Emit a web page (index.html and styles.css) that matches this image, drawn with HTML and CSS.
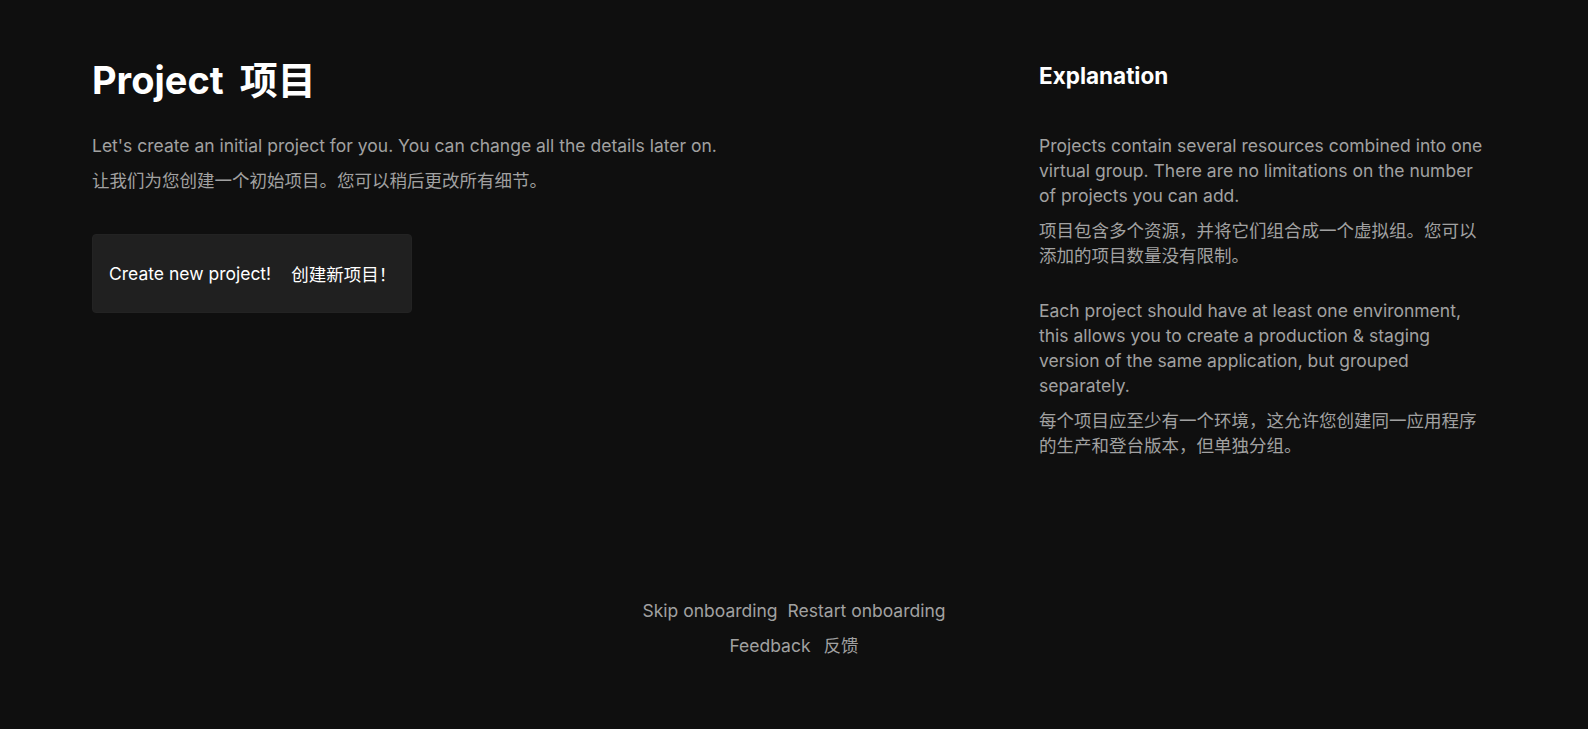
FILE: index.html
```html
<!DOCTYPE html>
<html lang="en">
<head>
<meta charset="utf-8">
<title>Project</title>
<link rel="stylesheet" href="styles.css">
</head>
<body>
<div class="page">
  <main class="content">
    <section class="main-col">
      <h1 class="title">Project <span class="title-zh">项目</span></h1>
      <p class="text">Let's create an initial project for you. You can change all the details later on.</p>
      <p class="text zh">让我们为您创建一个初始项目。您可以稍后更改所有细节。</p>
      <button class="create-btn" type="button"><span>Create new project!</span><span class="btn-zh">创建新项目！</span></button>
    </section>
    <aside class="explain">
      <h2 class="explain-title">Explanation</h2>
      <div class="block">
        <p class="text">Projects contain several resources combined into one virtual group. There are no limitations on the number of projects you can add.</p>
        <p class="text zh">项目包含多个资源，并将它们组合成一个虚拟组。您可以添加的项目数量没有限制。</p>
      </div>
      <div class="block">
        <p class="text">Each project should have at least one environment, this allows you to create a production &amp; staging version of the same application, but grouped separately.</p>
        <p class="text zh">每个项目应至少有一个环境，这允许您创建同一应用程序的生产和登台版本，但单独分组。</p>
      </div>
    </aside>
  </main>
  <footer class="footer">
    <div class="footer-row">
      <a class="footer-link" href="#">Skip onboarding</a>
      <a class="footer-link" href="#">Restart onboarding</a>
    </div>
    <div class="footer-row wide">
      <a class="footer-link" href="#">Feedback</a>
      <a class="footer-link" href="#">反馈</a>
    </div>
  </footer>
</div>
</body>
</html>
```

FILE: styles.css
```css
* {
  box-sizing: border-box;
}

html, body {
  margin: 0;
  padding: 0;
  background: #0f0f0f;
}

body {
  font-family: Inter, "Noto Sans CJK SC", sans-serif;
  font-size: 17.5px;
  color: #a1a1a1;
}

.page {
  min-height: 100vh;
  display: flex;
  flex-direction: column;
}

.content {
  display: grid;
  grid-template-columns: 1fr 448px;
  column-gap: 64px;
  padding: 60px 101px 0 92px;
}

.main-col {
  display: flex;
  flex-direction: column;
  align-items: flex-start;
}

.title {
  margin: 0;
  font-size: 38px;
  line-height: 1.1;
  font-weight: 700;
  color: #ffffff;
}

.title-zh {
  margin-left: 7px;
}

.text {
  margin: 0;
  line-height: 25px;
}

.main-col .text {
  margin-top: 31px;
}

.main-col .text.zh,
.block .text.zh {
  margin-top: 10px;
}

.create-btn {
  margin-top: 41px;
  height: 79px;
  display: inline-flex;
  align-items: center;
  gap: 20px;
  padding: 0 15px 0 16px;
  background: #202020;
  border: 1px solid #232323;
  border-radius: 4px;
  color: #ffffff;
  font-family: Inter, "Noto Sans CJK SC", sans-serif;
  font-size: 17.5px;
  cursor: pointer;
}

.explain {
  display: flex;
  flex-direction: column;
}

.explain-title {
  margin: 1px 0 0;
  font-size: 22.5px;
  line-height: 1.3;
  font-weight: 700;
  color: #ffffff;
}

.block {
  margin-top: 30px;
}

.explain-title + .block {
  margin-top: 43px;
}

.footer {
  margin-top: auto;
  padding-bottom: 71px;
  display: flex;
  flex-direction: column;
  align-items: center;
  gap: 10px;
}

.footer-row {
  display: flex;
  gap: 10px;
  line-height: 25px;
}

.footer-row.wide {
  gap: 13px;
}

.footer-link {
  color: #a1a1a1;
  text-decoration: none;
}
```
